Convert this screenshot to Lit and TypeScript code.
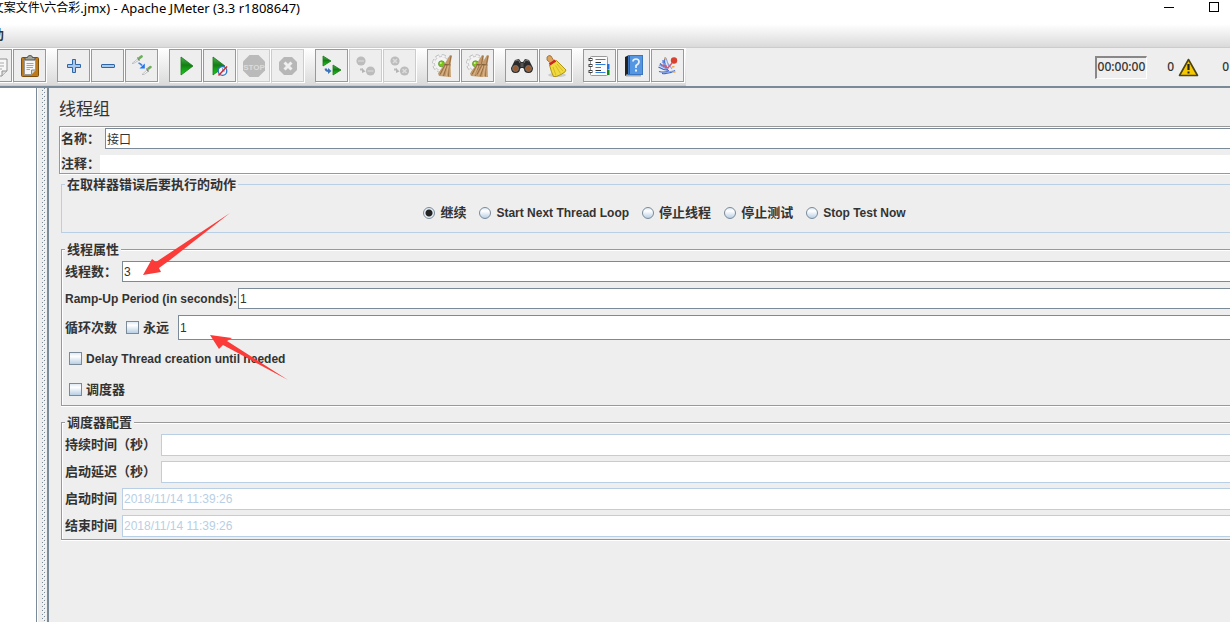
import { LitElement, html, css, svg } from "lit";
import { customElement } from "lit/decorators.js";

const broom = (dx: number) => svg`
  <g transform="translate(${dx} 0)">
    <path d="M19 2 21 2.500 19.500 11 20 24 14 23.500 8 23 7 20.500 13.500 11z" fill="#c49a6a"/>
    <path d="M20 3 18.500 11M14 12 9 21.500M16 12 12.500 23M18.500 13 17.500 23.500" stroke="#8a6238" stroke-width=".8" fill="none"/>
    <path d="M15 13 10.500 22.500M17.500 12 15 23.500M19 12 19 23" stroke="#e2c298" stroke-width=".7" fill="none"/>
    <path d="M13.500 11.500 19.500 12" stroke="#7d5a35" stroke-width="1"/>
  </g>`;

const gear = svg`
  <circle cx="10.500" cy="10.500" r="7.600" fill="none" stroke="#b4b4b4" stroke-width="3.400" stroke-dasharray="3.600 2.370"/>
  <circle cx="10.500" cy="10.500" r="7" fill="#f4f4f4" stroke="#bbb" stroke-width=".8"/>
  <circle cx="10.500" cy="10.500" r="7.500" fill="none" stroke="#f4f4f4" stroke-width="2.200" stroke-dasharray="2.800 3.090" stroke-dashoffset="-.4"/>
  <circle cx="10.500" cy="10.800" r="3" fill="#77c814" stroke="#6a9440" stroke-width=".9"/>
  <circle cx="9.800" cy="10" r="1" fill="#d5f59a"/>`;

const grayDisc = (x: number, y: number) => svg`<circle cx="${x}" cy="${y}" r="4.600" fill="#bcbcbc"/>`;
const triangle = (x: number, y: number, w: number, h: number) => svg`
  <path d="M${x} ${y} L${x + w} ${y + h / 2} L${x} ${y + h}z" fill="url(#play)" stroke="#187a18" stroke-width=".8"/>`;
const playFill = svg`<defs><linearGradient id="play" x1="0" y1="0" x2="0" y2="1">
  <stop offset="0" stop-color="#4fb34f"/><stop offset=".45" stop-color="#137d13"/><stop offset="1" stop-color="#19d419"/>
</linearGradient></defs>`;

const icons: Record<string, unknown> = {
  copy: svg`<path d="M9 6H24V18L19 23H9z" fill="#f8f8f8" stroke="#929292"/><path d="M24 18H19V23" fill="#ddd" stroke="#929292"/>
    <path d="M12 10H21M12 13H21M12 16H19" stroke="#aaa"/>`,
  paste: svg`<rect x="4.500" y="4.500" width="17" height="19" rx="1" fill="#bd7b1c" stroke="#7e4d08"/>
    <path d="M7.500 6.500H18.500V17L14.500 21.500H7.500z" fill="#f7f7f5" stroke="#999"/>
    <path d="M18.500 17H14.500V21.500" fill="#d8d8d4" stroke="#888"/>
    <path d="M9.500 10.500H16.500M9.500 12.500H16.500M9.500 14.500H16M9.500 16.500H13" stroke="#9b9b9b" stroke-width=".9"/>
    <path d="M8 7V4.500H10.500Q10.500 2.500 13 2.500T15.500 4.500H18V7z" fill="#a2a59b" stroke="#555753"/>`,
  plus: svg`<path d="M11.500 6.500H14.500V11.500H19.500V14.500H14.500V19.500H11.500V14.500H6.500V11.500H11.500z" fill="#a9c9ec" stroke="#2f66a8"/>`,
  minus: svg`<rect x="6.500" y="11.500" width="13" height="3" rx=".5" fill="#a9c9ec" stroke="#2f66a8"/>`,
  toggle: svg`<path d="M3 10.500 8.500 6 9.500 7.500 4.500 10.500z" fill="#fafafa" stroke="#b5b5b5" stroke-width=".8"/>
    <path d="M8.500 4.500 10.500 7.500" stroke="#666" stroke-width="1.100"/><path d="M10.500 5 12.500 3.500" stroke="#6cae5a" stroke-width="2.800" stroke-linecap="round"/>
    <path d="M13 21.500 18 17 19 18.500 15 21.500z" fill="#fafafa" stroke="#b5b5b5" stroke-width=".8"/>
    <path d="M17.500 15.500 19.500 18.500" stroke="#666" stroke-width="1.100"/><path d="M19.500 15.500 21.500 14" stroke="#6cae5a" stroke-width="2.600" stroke-linecap="round"/>
    <path d="M9.500 10Q11.500 10.500 13 12.500" stroke="#3f84e8" stroke-width="1.800" fill="none"/><path d="M15.800 10.500V15.500H10.500z" fill="#2277ee"/>`,
  start: svg`${playFill}${triangle(8, 4, 12, 18)}`,
  startNoPause: svg`${playFill}${triangle(6, 4, 12, 18)}
    <circle cx="15.500" cy="18" r="4.300" fill="#eef4fb" stroke="#2d74c4" stroke-width="1.300"/>
    <path d="M15.500 18V15M15.500 18H18" stroke="#5588bb" stroke-width=".7"/><path d="M11.500 22.500 20 13.500" stroke="#e02424" stroke-width="1.500"/>`,
  stop: svg`<path d="M8.500 2H17.500L24 8.500V17.500L17.500 24H8.500L2 17.500V8.500z" fill="#bababa"/>
    <text x="13" y="16.500" text-anchor="middle" font-family="Liberation Sans" font-weight="bold" font-size="8" fill="#dcdcdc">STOP</text>`,
  shutdown: svg`<path d="M9 4H17L22 9V17L17 22H9L4 17V9z" fill="#b7b7b7"/>
    <path d="M9.500 9.500 16.500 16.500M16.500 9.500 9.500 16.500" stroke="#efefef" stroke-width="3"/>`,
  remoteStart: svg`${playFill}${triangle(4, 3, 8, 10)}${triangle(14, 12, 8, 10)}
    <path d="M6.500 15.500Q7 18 9.500 18" fill="none" stroke="#3a75bb" stroke-width="2"/><path d="M9 15 12.500 18 9 21z" fill="#3a75bb"/>`,
  remoteStop: svg`${grayDisc(8, 8)}${grayDisc(17.5, 18)}<path d="M5 8H11M14.500 18H20.500" stroke="#cdcdcd" stroke-width="2"/>
    <path d="M7 16.500H10" stroke="#bbb" stroke-width="2"/><path d="M9 15 12.500 18.500 9 20z" fill="#b5b5b5"/>`,
  remoteShutdown: svg`${grayDisc(8, 8)}${grayDisc(17.5, 18)}
    <path d="M6 6 10 10M10 6 6 10M15.500 16 19.500 20M19.500 16 15.500 20" stroke="#dcdcdc" stroke-width="1.500"/>
    <path d="M7 16.500H10" stroke="#bbb" stroke-width="2"/><path d="M9 15 12.500 18.500 9 20z" fill="#b5b5b5"/>`,
  clear: svg`${gear}${broom(0)}`,
  clearAll: svg`${gear}${broom(-2)}${broom(3)}`,
  search: svg`<path d="M6 7 10 6 12 9H14L16 6 20 7 24 15Q24 20 19.500 20T15 16L14 15H12L11 16Q11 20 6.500 20T2 15z" fill="#2b2b2b"/>
    <path d="M6 8 9.500 7 11 10M20 8 16.500 7 15 10" stroke="#777" fill="none"/>
    <circle cx="6.500" cy="15.500" r="3" fill="#9a5a2c" stroke="#777" stroke-width=".9"/><circle cx="19.500" cy="15.500" r="3" fill="#9a5a2c" stroke="#777" stroke-width=".9"/>
    <rect x="11.500" y="10" width="3" height="4" fill="#555"/>`,
  searchReset: svg`<ellipse cx="14" cy="22" rx="9" ry="2" fill="#ccc"/>
    <path d="M4 4Q6 1.500 8 3L11 8 8 10.500 4 7z" fill="#dda45c" stroke="#9b6424" stroke-width=".8"/>
    <path d="M6.500 12 13.500 7.500 23 17Q23.500 18.500 18 21.500T10.500 23.500Q8.500 20 6.500 12z" fill="#f0da3c" stroke="#a58a10" stroke-width=".9"/>
    <path d="M10 14 13 22.500M12.500 12.500 17.500 20.500M14 11 20 18" stroke="#d2b526" stroke-width=".9"/>
    <path d="M6.500 11.500 12.500 7.500" stroke="#cf2222" stroke-width="2.400"/>`,
  functions: svg`<rect x="3.500" y="3.500" width="17" height="19" rx="1" fill="#fcfcfc" stroke="#999"/>
    <path d="M8.500 6.500H18.500M8.500 11.500H18.500M8.500 14.500H14M8.500 19.500H18.500" stroke="#2f80e0" stroke-width="1.200"/>
    <path d="M8.500 9.500H14M8.500 17.500H14" stroke="#333" stroke-width="1"/>
    <path d="M1.500 6.500H5.500M1.500 12.500H5.500M1.500 18.500H5.500" stroke="#444" stroke-width="3"/><path d="M2.500 6.500H5M2.500 12.500H5M2.500 18.500H5" stroke="#fff" stroke-width="1.200"/>
    <rect x="20" y="11" width="2.500" height="5" fill="#2372df"/><rect x="20" y="16.500" width="2.500" height="5.500" fill="#128a1b"/>`,
  help: svg`<path d="M4 4 8 2V21L4 23z" fill="#222"/><rect x="5" y="21.500" width="15" height="2" fill="#aaa"/>
    <rect x="7.500" y="2.500" width="14" height="19" fill="#5596e2" stroke="#3b76bf"/><path d="M8.500 3V21" stroke="#2f5c98"/>
    <path d="M12 8.500Q12 6 15 6T18 8.800Q18 11 15 12.500V15" fill="none" stroke="#e8f1fb" stroke-width="1.700"/><rect x="14" y="16.500" width="2" height="2" fill="#e8f1fb"/>`,
  logo: svg`<g fill="none" stroke="#4068c8" stroke-width="1.200"><path d="M10.500 4.500Q8 8 12 16M8 7Q8 11 12 16M5 10.500Q8 14 13 17M3.500 14Q8 17 14 17.500M4 18.500Q9 20 14 18M7 20.500Q14 21.500 20 17.500"/></g>
    <g fill="none" stroke="#86a5ea" stroke-width="1.100"><path d="M11 5 14 14M7 9 12 13M4 12 12 16M8 20 18 18M12 9 17 16"/></g>
    <path d="M6 12Q10 12 13 15L17 10" stroke="#e0556a" stroke-width="1.300" fill="none"/>
    <path d="M9.500 4.500 11 6M17 14 19.500 13.500M18 19H20.500" stroke="#efaa4b" stroke-width="1.700"/>
    <circle cx="19" cy="7.500" r="3.200" fill="#d9402f"/>`,
};

type Tool = { icon: string; label: string; disabled?: boolean };
const toolGroups: Tool[][] = [
  [{ icon: "copy", label: "复制" }, { icon: "paste", label: "粘贴" }],
  [{ icon: "plus", label: "展开" }, { icon: "minus", label: "收起" }, { icon: "toggle", label: "切换" }],
  [
    { icon: "start", label: "启动" },
    { icon: "startNoPause", label: "不停顿开始" },
    { icon: "stop", label: "停止", disabled: true },
    { icon: "shutdown", label: "关闭", disabled: true },
  ],
  [
    { icon: "remoteStart", label: "远程全部启动" },
    { icon: "remoteStop", label: "远程全部停止", disabled: true },
    { icon: "remoteShutdown", label: "远程全部关闭", disabled: true },
  ],
  [{ icon: "clear", label: "清除" }, { icon: "clearAll", label: "清除全部" }],
  [{ icon: "search", label: "查找" }, { icon: "searchReset", label: "重置查找" }],
  [{ icon: "functions", label: "函数助手" }, { icon: "help", label: "帮助" }, { icon: "logo", label: "关于" }],
];

const errorActions = ["继续", "Start Next Thread Loop", "停止线程", "停止测试", "Stop Test Now"];

const schedule = [
  { id: "duration", label: "持续时间（秒）", value: "", wide: true },
  { id: "delay", label: "启动延迟（秒）", value: "", wide: true },
  { id: "begin", label: "启动时间", value: "2018/11/14 11:39:26", wide: false },
  { id: "end", label: "结束时间", value: "2018/11/14 11:39:26", wide: false },
];

@customElement("app-root")
export class AppRoot extends LitElement {
  static styles = css`
    :host {
      display: flex;
      flex-direction: column;
      height: 100vh;
      overflow: hidden;
      background: #eee;
      color: #333;
      font: bold 12px/16px "Liberation Sans", "Noto Sans CJK SC", sans-serif;
    }
    * { box-sizing: border-box; }
    button, input { font: inherit; color: inherit; margin: 0; padding: 0; border-radius: 0; }
    .cjk { font-size: 13px; }

    .titlebar {
      display: flex;
      align-items: flex-start;
      justify-content: space-between;
      height: 24px;
      flex: none;
      padding-right: 11px;
      background: #fff;
      color: #000;
      font: 13px/16px "Noto Sans", "Noto Sans CJK SC", sans-serif;
    }
    .title { display: flex; justify-content: flex-end; width: 300px; overflow: hidden; white-space: pre; }
    .path { font-size: 12px; }
    .window-buttons { display: flex; gap: 35px; padding-top: 2px; }
    .window-buttons button { width: 10px; height: 11px; border: 0; background: none; display: flex; }

    .menubar {
      flex: none;
      height: 24px;
      padding-top: 3px;
      border-bottom: 1px solid #ccc;
      background: linear-gradient(#fff, #dadada);
    }
    .menu { display: flex; justify-content: flex-end; width: 4px; overflow: hidden; white-space: nowrap; border: 0; background: none; }

    .toolbar-row { display: flex; flex: none; height: 40px; border-bottom: 2px solid #7a8a99; }
    .toolbar {
      display: flex;
      gap: 11px;
      margin-left: -21px;
      padding: 1px 2px 0 0;
      background: linear-gradient(#fff, #dadada);
      border-bottom: 1px solid #ccc;
    }
    .group { display: flex; gap: 1px; }
    .tool {
      width: 33px;
      height: 33px;
      padding: 3px;
      border: 1px solid #999;
      background: #eee;
      box-shadow: 1px 1px #fff;
    }
    .tool:disabled { border-color: #ccc; }
    .tool svg { display: block; }

    .status {
      display: flex;
      flex: 1;
      justify-content: flex-end;
      align-items: center;
      padding-right: 1px;
      font: 500 12px/16px "Noto Sans", sans-serif;
    }
    .clock {
      margin-right: 20px;
      padding: 1px 1px 3px;
      border: 1px solid #fff;
      border-width: 2px 1px 1px 2px;
      border-color: #888 #fff #fff #888;
    }
    .warnings { display: flex; align-items: center; gap: 4px; margin-right: 23px; }
    .warnings button { display: flex; border: 0; background: none; }

    .body { display: flex; flex: 1; min-height: 0; }
    .tree { flex: none; width: 37px; background: #fff; border-right: 1px solid #7a8a99; }
    .splitter { flex: none; width: 10px; padding-left: 4px; border-left: 1px solid #fff; }
    .splitter svg { display: block; }
    .main {
      position: relative;
      flex: 1;
      min-width: 0;
      overflow: hidden;
      padding: 9px 0 0 10px;
      border-left: 2px solid #7a8a99;
    }
    .panel { width: calc(100% + 38px); }
    h1 { margin: 0; font: 17px/22px "Noto Sans CJK SC", sans-serif; }

    .naming { margin-top: 7px; border: 1px solid #999; box-shadow: inset 1px 1px #fff, 1px 1px #fff; padding: 1px 1px 0; }
    .row { display: flex; align-items: center; white-space: nowrap; }
    .row label { flex: none; }
    .text {
      flex: 1;
      min-width: 0;
      height: 21px;
      padding: 0 1px;
      border: 1px solid #7a8a99;
      background: #fff;
      font-weight: normal;
      outline: 0;
    }
    .name-label { width: 44px; }
    .comment-label { width: 39px; }
    .naming .row + .row { margin-top: 6px; }
    .comment { height: 18px; border: 0; }

    fieldset {
      min-width: 0;
      margin: 8px 0 0 2px;
      padding: 3px 3px;
      border: 1px solid #999;
      box-shadow: inset 1px 1px #fff, 0 1px #fff;
    }
    legend { margin-left: 0; padding: 0 2px; background: #eee; font-size: 13px; line-height: 17px; }
    .actions { margin-top: 2px; padding: 0; border-color: #b8cfe5; box-shadow: none; }
    .actions legend { margin-left: 3px; }
    .options { display: flex; justify-content: center; align-items: center; gap: 13px; height: 39px; }
    .option { display: flex; align-items: center; gap: 5px; white-space: nowrap; }
    .option input, .check {
      appearance: none;
      flex: none;
      width: 13px;
      height: 13px;
      border: 1px solid #7a8a99;
      background: linear-gradient(#dfe9f3, #fff 30%, #b8cfe5);
    }
    .option input { width: 12px; height: 12px; border-radius: 50%; }
    .option input:checked { background: radial-gradient(circle, #222 3px, #e6eef6 4px); }

    .stack { display: flex; flex-direction: column; gap: 6px; }
    .tall { height: 25px; }
    .tall .text { height: 25px; }
    .threads { width: 57px; }
    .ramp { width: 173px; }
    .loops { width: 61px; }
    .tick { display: flex; align-items: center; gap: 4px; }
    .forever { width: 52px; }
    .indent { padding-left: 4px; }

    .schedule { padding-bottom: 2px; }
    .schedule .stack { gap: 5px; }
    .schedule label { width: 57px; }
    .schedule .wide { width: 96px; }
    .schedule .text { height: 22px; border-color: #b8cfe5; color: #b8cfe5; }

    .marks { position: absolute; left: 0; top: 0; pointer-events: none; }
  `;

  private renderTool(tool: Tool) {
    return html`<button class="tool" aria-label=${tool.label} ?disabled=${tool.disabled}>
      <svg width="25" height="25" viewBox="0 0 25 25">${icons[tool.icon]}</svg>
    </button>`;
  }

  render() {
    return html`
      <header class="titlebar">
        <div class="title"><span class="path">文案文件\\六合彩</span><span>.jmx) - Apache JMeter (3.3 r1808647)</span></div>
        <div class="window-buttons">
          <button aria-label="最小化"><svg width="10" height="11"><path d="M0 5.500H10" stroke="#000" /></svg></button>
          <button aria-label="最大化"><svg width="10" height="11"><rect x=".5" y=".5" width="9" height="9" fill="none" stroke="#000" /></svg></button>
        </div>
      </header>
      <nav class="menubar"><button class="menu cjk">帮助</button></nav>
      <div class="toolbar-row">
        <div class="toolbar">
          ${toolGroups.map((g) => html`<div class="group">${g.map((t) => this.renderTool(t))}</div>`)}
        </div>
        <div class="status">
          <span class="clock">00:00:00</span>
          <span class="warnings">0
            <button aria-label="日志">
              <svg width="21" height="19" viewBox="0 0 21 19">
                <path d="M10.500 1.500 19.500 17.500H1.500z" fill="#f5c800" stroke="#4d4212" stroke-width="1.600" stroke-linejoin="round" />
                <path d="M10.500 6V12" stroke="#222" stroke-width="2.200" /><rect x="9.500" y="13.500" width="2" height="2" fill="#222" />
              </svg>
            </button>
          </span>
          <span>0</span>
        </div>
      </div>
      <div class="body">
        <aside class="tree"></aside>
        <div class="splitter">
          <svg width="4" height="100%" shape-rendering="crispEdges" aria-hidden="true">
            <defs>
              <pattern id="grip" width="4" height="4" patternUnits="userSpaceOnUse">
                <rect x="0" y="2" width="1" height="1" fill="#7a8a99" /><rect x="2" y="0" width="1" height="1" fill="#7a8a99" />
                <rect x="1" y="3" width="1" height="1" fill="#fff" /><rect x="3" y="1" width="1" height="1" fill="#fff" />
              </pattern>
            </defs>
            <rect width="4" height="100%" fill="url(#grip)" />
          </svg>
        </div>
        <main class="main">
          <div class="panel">
            <h1>线程组</h1>
            <section class="naming">
              <div class="row">
                <label class="name-label cjk" for="name">名称：</label>
                <input class="text" id="name" value="接口" />
              </div>
              <div class="row">
                <label class="comment-label cjk" for="comment">注释：</label>
                <input class="text comment" id="comment" />
              </div>
            </section>

            <fieldset class="actions">
              <legend>在取样器错误后要执行的动作</legend>
              <div class="options">
                ${errorActions.map(
                  (a, i) => html`<label class="option ${/[a-z]/.test(a) ? "" : "cjk"}">
                    <input type="radio" name="action" ?checked=${i === 0} />${a}
                  </label>`
                )}
              </div>
            </fieldset>

            <fieldset>
              <legend>线程属性</legend>
              <div class="stack">
                <div class="row">
                  <label class="threads cjk" for="threads">线程数：</label>
                  <input class="text" id="threads" value="3" />
                </div>
                <div class="row">
                  <label class="ramp" for="ramp">Ramp-Up Period (in seconds):</label>
                  <input class="text" id="ramp" value="1" />
                </div>
                <div class="row tall">
                  <label class="loops cjk" for="loops">循环次数</label>
                  <label class="tick forever cjk"><input class="check" type="checkbox" />永远</label>
                  <input class="text" id="loops" value="1" />
                </div>
                <div class="row tall indent">
                  <label class="tick"><input class="check" type="checkbox" />Delay Thread creation until needed</label>
                </div>
                <div class="row tall indent">
                  <label class="tick cjk"><input class="check" type="checkbox" />调度器</label>
                </div>
              </div>
            </fieldset>

            <fieldset class="schedule">
              <legend>调度器配置</legend>
              <div class="stack">
                ${schedule.map(
                  (f) => html`<div class="row">
                    <label class="cjk ${f.wide ? "wide" : ""}" for=${f.id}>${f.label}</label>
                    <input class="text" id=${f.id} .value=${f.value} disabled />
                  </div>`
                )}
              </div>
            </fieldset>
          </div>
          <svg class="marks" width="260" height="310" viewBox="49 88 260 310" fill="#fb3b38" aria-hidden="true">
            <path d="M143 275 152 259 156 262 230 213 170 260 159 268 161 272z" />
            <path d="M210 335 232 338 227 341 288 380 223 345 219 349z" />
          </svg>
        </main>
      </div>
    `;
  }
}
